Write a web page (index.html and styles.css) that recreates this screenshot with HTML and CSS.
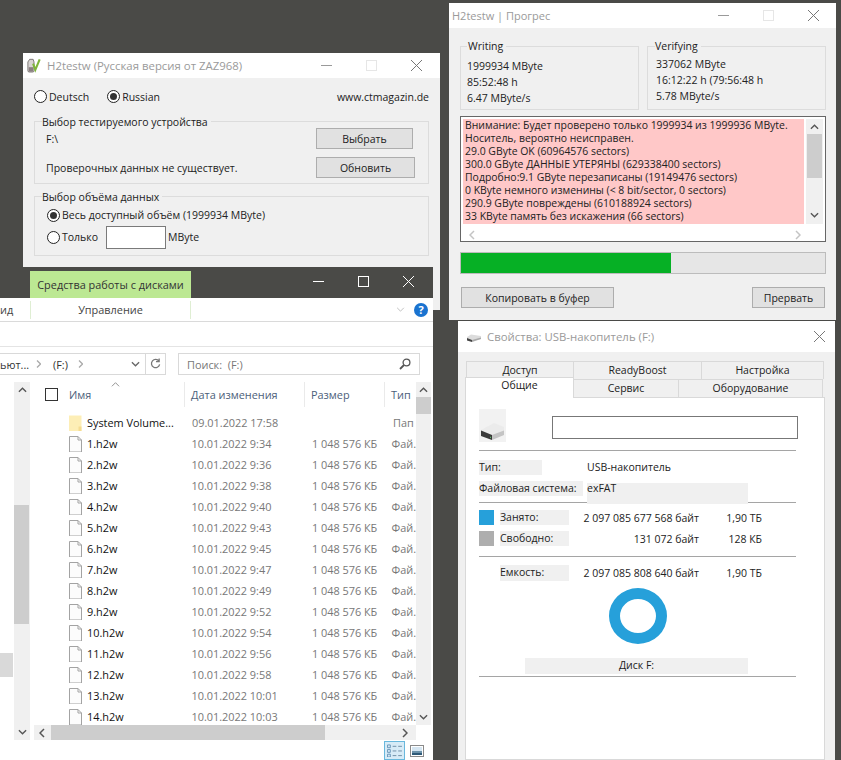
FILE: index.html
```html
<!DOCTYPE html>
<html lang="ru">
<head>
<meta charset="utf-8">
<title>H2testw</title>
<link rel="stylesheet" href="styles.css">
</head>
<body>
<div class="desktop">

<section class="win win-select">
  <header class="titlebar">
    <svg class="appicon" viewBox="0 0 16 17"><path d="M3 2h4l1 3v10a1.500 1.500 0 0 1-1.500 1.500h-4A1.500 1.500 0 0 1 1 15V5z" fill="#d8d4d2" stroke="#6e6a68"/><rect x="2" y="11" width="5" height="5" fill="#8a7f80"/><path d="M7 7l2.500 7L14.500 2" fill="none" stroke="#7fb53a" stroke-width="2.400"/></svg>
    <span class="title">H2testw (Русская версия от ZAZ968)</span>
    <span class="caps">
      <svg viewBox="0 0 11 11" class="cap"><path d="M0 5.500h11" stroke="#9a9a9a"/></svg>
      <svg viewBox="0 0 11 11" class="cap"><rect x=".5" y=".5" width="10" height="10" fill="none" stroke="#e6e6e6"/></svg>
      <svg viewBox="0 0 11 11" class="cap"><path d="M0 0l11 11M11 0L0 11" stroke="#777"/></svg>
    </span>
  </header>
  <div class="sel-body">
    <div class="langrow">
      <label class="radio"><i class="dot"></i>Deutsch</label>
      <label class="radio"><i class="dot on"></i>Russian</label>
      <span class="url">www.ctmagazin.de</span>
    </div>
    <fieldset class="group g-device">
      <legend>Выбор тестируемого устройства</legend>
      <div class="devrow"><span>F:\</span><button class="btn b-pick">Выбрать</button></div>
      <div class="devrow"><span>Проверочных данных не существует.</span><button class="btn b-refresh">Обновить</button></div>
    </fieldset>
    <fieldset class="group g-volume">
      <legend>Выбор объёма данных</legend>
      <label class="radio"><i class="dot on"></i>Весь доступный объём (1999934 MByte)</label>
      <div class="onlyrow">
        <label class="radio"><i class="dot"></i>Только</label>
        <span class="numbox"></span>
        <span>MByte</span>
      </div>
    </fieldset>
  </div>
</section>

<section class="win win-explorer">
  <header class="ex-title">
    <div class="disktab">Средства работы с дисками</div>
    <span class="ex-caps">
      <svg viewBox="0 0 11 11" class="excap"><path d="M0 5.500h11" stroke="#fff"/></svg>
      <svg viewBox="0 0 11 11" class="excap"><rect x=".5" y=".5" width="10" height="10" fill="none" stroke="#fff"/></svg>
      <svg viewBox="0 0 11 11" class="excap"><path d="M0 0l11 11M11 0L0 11" stroke="#fff"/></svg>
    </span>
  </header>
  <div class="ribbon">
    <span class="rib-view">ид</span>
    <span class="rib-manage">Управление</span>
    <span class="rib-right">
      <svg class="rib-chev" viewBox="0 0 10 6"><path d="M1 1l4 4 4-4" fill="none" stroke="#b5b5b5"/></svg>
      <span class="help">?</span>
    </span>
  </div>
  <div class="ribbon-gap"></div>
  <div class="addr-row">
    <div class="addr">
      <span class="crumb c1">ьют...</span>
      <svg class="crumb-arrow" viewBox="0 0 5 8"><path d="M1 .5L4.500 4 1 7.500" fill="none" stroke="#aaa" stroke-width="1.300"/></svg>
      <span class="crumb c2">(F:)</span>
      <svg class="crumb-arrow" viewBox="0 0 5 8"><path d="M1 .5L4.500 4 1 7.500" fill="none" stroke="#aaa" stroke-width="1.300"/></svg>
      <svg class="addr-chev" viewBox="0 0 10 6"><path d="M1 1l4 4 4-4" fill="none" stroke="#666" stroke-width="1.400"/></svg>
      <span class="addr-ref"><svg viewBox="0 0 12 12"><path d="M9.800 3.500A4.500 4.500 0 1 0 10.500 7M10 .5V4H6.500" fill="none" stroke="#777" stroke-width="1.400"/></svg></span>
    </div>
    <div class="search"><span>Поиск:&nbsp; (F:)</span><svg viewBox="0 0 12 12"><circle cx="7.500" cy="4.500" r="3.400" fill="none" stroke="#555" stroke-width="1.300"/><path d="M5 7l-4 4" stroke="#555" stroke-width="1.800"/></svg></div>
  </div>
  <div class="ex-main">
    <aside class="nav">
      <div class="nav-scroll">
        <svg class="chev" viewBox="0 0 10 6"><path d="M1 5l4-4 4 4" fill="none" stroke="#555" stroke-width="1.500"/></svg>
        <div class="nav-thumb"></div>
        <svg class="chev nav-down" viewBox="0 0 10 6"><path d="M1 1l4 4 4-4" fill="none" stroke="#555" stroke-width="1.500"/></svg>
      </div>
      <div class="nav-sel"></div>
    </aside>
    <div class="list">
      <div class="list-view">
        <div class="columns">
          <div class="head">
            <span class="c-check"><i class="check"></i></span>
            <span class="c-name">Имя<svg class="sort" viewBox="0 0 10 5"><path d="M1 4.500l4-4 4 4" fill="none" stroke="#888"/></svg></span>
            <span class="c-date">Дата изменения</span>
            <span class="c-size">Размер</span>
            <span class="c-type">Тип</span>
          </div>
          <div class="rows">
            <div class="row"><svg class="ficon" viewBox="0 0 13 16"><path d="M0 .5h12.500V16H0z" fill="#fdeeb6"/><path d="M9.500 11.500h3V16h-3z" fill="#f5dc92"/></svg><span class="r-name">System Volume...</span><span class="r-date">09.01.2022 17:58</span><span class="r-size"></span><span class="r-type">Пап</span></div>
            <div class="row"><svg class="ficon"><use href="#file"/></svg><span class="r-name">1.h2w</span><span class="r-date">10.01.2022 9:34</span><span class="r-size">1 048 576 КБ</span><span class="r-type">Фай.</span></div>
            <div class="row"><svg class="ficon"><use href="#file"/></svg><span class="r-name">2.h2w</span><span class="r-date">10.01.2022 9:36</span><span class="r-size">1 048 576 КБ</span><span class="r-type">Фай.</span></div>
            <div class="row"><svg class="ficon"><use href="#file"/></svg><span class="r-name">3.h2w</span><span class="r-date">10.01.2022 9:38</span><span class="r-size">1 048 576 КБ</span><span class="r-type">Фай.</span></div>
            <div class="row"><svg class="ficon"><use href="#file"/></svg><span class="r-name">4.h2w</span><span class="r-date">10.01.2022 9:40</span><span class="r-size">1 048 576 КБ</span><span class="r-type">Фай.</span></div>
            <div class="row"><svg class="ficon"><use href="#file"/></svg><span class="r-name">5.h2w</span><span class="r-date">10.01.2022 9:43</span><span class="r-size">1 048 576 КБ</span><span class="r-type">Фай.</span></div>
            <div class="row"><svg class="ficon"><use href="#file"/></svg><span class="r-name">6.h2w</span><span class="r-date">10.01.2022 9:45</span><span class="r-size">1 048 576 КБ</span><span class="r-type">Фай.</span></div>
            <div class="row"><svg class="ficon"><use href="#file"/></svg><span class="r-name">7.h2w</span><span class="r-date">10.01.2022 9:47</span><span class="r-size">1 048 576 КБ</span><span class="r-type">Фай.</span></div>
            <div class="row"><svg class="ficon"><use href="#file"/></svg><span class="r-name">8.h2w</span><span class="r-date">10.01.2022 9:49</span><span class="r-size">1 048 576 КБ</span><span class="r-type">Фай.</span></div>
            <div class="row"><svg class="ficon"><use href="#file"/></svg><span class="r-name">9.h2w</span><span class="r-date">10.01.2022 9:52</span><span class="r-size">1 048 576 КБ</span><span class="r-type">Фай.</span></div>
            <div class="row"><svg class="ficon"><use href="#file"/></svg><span class="r-name">10.h2w</span><span class="r-date">10.01.2022 9:54</span><span class="r-size">1 048 576 КБ</span><span class="r-type">Фай.</span></div>
            <div class="row"><svg class="ficon"><use href="#file"/></svg><span class="r-name">11.h2w</span><span class="r-date">10.01.2022 9:56</span><span class="r-size">1 048 576 КБ</span><span class="r-type">Фай.</span></div>
            <div class="row"><svg class="ficon"><use href="#file"/></svg><span class="r-name">12.h2w</span><span class="r-date">10.01.2022 9:58</span><span class="r-size">1 048 576 КБ</span><span class="r-type">Фай.</span></div>
            <div class="row"><svg class="ficon"><use href="#file"/></svg><span class="r-name">13.h2w</span><span class="r-date">10.01.2022 10:01</span><span class="r-size">1 048 576 КБ</span><span class="r-type">Фай.</span></div>
            <div class="row"><svg class="ficon"><use href="#file"/></svg><span class="r-name">14.h2w</span><span class="r-date">10.01.2022 10:03</span><span class="r-size">1 048 576 КБ</span><span class="r-type">Фай.</span></div>
          </div>
        </div>
        <div class="list-scroll">
          <svg class="chev" viewBox="0 0 10 6"><path d="M1 5l4-4 4 4" fill="none" stroke="#555" stroke-width="1.500"/></svg>
          <div class="v-thumb"></div>
          <svg class="chev v-down" viewBox="0 0 10 6"><path d="M1 1l4 4 4-4" fill="none" stroke="#555" stroke-width="1.500"/></svg>
        </div>
      </div>
      <div class="hscroll">
        <svg viewBox="0 0 6 10" class="hchev"><path d="M5 1L1 5l4 4" fill="none" stroke="#555" stroke-width="1.500"/></svg>
        <div class="h-track"><div class="h-thumb"></div></div>
        <svg viewBox="0 0 6 10" class="hchev"><path d="M1 1l4 4-4 4" fill="none" stroke="#555" stroke-width="1.500"/></svg>
      </div>
      <div class="statusbar">
        <span class="vbtn active"><svg viewBox="0 0 16 14"><path d="M.5 1h3v3h-3zM.5 6h3v3h-3zM.5 11h3v3h-3z" fill="none" stroke="#4c7fa8" stroke-width=".8"/><path d="M6 2.500h4M12 2.500h4M6 7.500h4M12 7.500h4M6 12.500h4M12 12.500h4" stroke="#6b8aa3"/></svg></span>
        <span class="vbtn vbtn-pic"><svg viewBox="0 0 14 12"><rect x=".5" y=".5" width="13" height="11" fill="#fff" stroke="#8a8a8a"/><rect x="2" y="2" width="10" height="4" fill="#d5e6f2"/><rect x="2" y="6" width="10" height="2" fill="#6d93ab"/><rect x="2" y="8" width="10" height="2" fill="#2f5a78"/></svg></span>
      </div>
    </div>
  </div>
</section>

<section class="win win-progress">
  <header class="titlebar prog-title">
    <span class="title">H2testw | Прогрес</span>
    <span class="caps">
      <svg viewBox="0 0 11 11" class="cap"><path d="M0 5.500h11" stroke="#9a9a9a"/></svg>
      <svg viewBox="0 0 11 11" class="cap"><rect x=".5" y=".5" width="10" height="10" fill="none" stroke="#e6e6e6"/></svg>
      <svg viewBox="0 0 11 11" class="cap"><path d="M0 0l11 11M11 0L0 11" stroke="#777"/></svg>
    </span>
  </header>
  <div class="prog-body">
    <div class="stats">
      <fieldset class="group stat">
        <legend>Writing</legend>
        <div>1999934 MByte</div><div>85:52:48 h</div><div>6.47 MByte/s</div>
      </fieldset>
      <fieldset class="group stat stat-v">
        <legend>Verifying</legend>
        <div>337062 MByte</div><div>16:12:22 h (79:56:48 h</div><div>5.78 MByte/s</div>
      </fieldset>
    </div>
    <div class="logbox">
      <div class="log-main">
        <div class="log-text">
          <div>Внимание: Будет проверено только 1999934 из 1999936 MByte.</div>
          <div>Носитель, вероятно неисправен.</div>
          <div>29.0 GByte OK (60964576 sectors)</div>
          <div>300.0 GByte ДАННЫЕ УТЕРЯНЫ (629338400 sectors)</div>
          <div>Подробно:9.1 GByte перезаписаны (19149476 sectors)</div>
          <div>0 KByte немного изменины (&lt; 8 bit/sector, 0 sectors)</div>
          <div>290.9 GByte повреждены (610188924 sectors)</div>
          <div>33 KByte память без искажения (66 sectors)</div>
        </div>
        <div class="log-scroll">
          <svg class="chev" viewBox="0 0 10 6"><path d="M1 5l4-4 4 4" fill="none" stroke="#555" stroke-width="1.500"/></svg>
          <div class="log-thumb"></div>
          <svg class="chev log-down" viewBox="0 0 10 6"><path d="M1 1l4 4 4-4" fill="none" stroke="#555" stroke-width="1.500"/></svg>
        </div>
      </div>
      <div class="log-h">
        <svg viewBox="0 0 6 10" class="hchev"><path d="M5 1L1 5l4 4" fill="none" stroke="#c4c4c4" stroke-width="1.500"/></svg>
        <svg viewBox="0 0 6 10" class="hchev"><path d="M1 1l4 4-4 4" fill="none" stroke="#c4c4c4" stroke-width="1.500"/></svg>
      </div>
    </div>
    <div class="bar"><div class="bar-fill"></div></div>
    <div class="prog-btns"><button class="btn b-copy">Копировать в буфер</button><button class="btn b-abort">Прервать</button></div>
  </div>
</section>

<section class="win win-props">
  <header class="titlebar props-title">
    <svg class="drive-small" viewBox="0 0 16 8"><path d="M5 .5L15 2v3L6 7 1 5.500V3z" fill="#dcdcdc"/><path d="M1 4l5 2v2L1 6.500z" fill="#444"/><path d="M6 6l9-2.500V5L6 8z" fill="#aaa"/></svg>
    <span class="title">Свойства: USB-накопитель (F:)</span>
    <svg class="close" viewBox="0 0 11 11"><path d="M0 0l11 11M11 0L0 11" stroke="#777"/></svg>
  </header>
  <div class="props-body">
    <div class="tabs">
      <div class="tabrow tabs-back">
        <span class="tab t1">Доступ</span><span class="tab t2">ReadyBoost</span><span class="tab t3">Настройка</span>
      </div>
      <div class="tabrow tabs-front">
        <span class="tab tactive">Общие</span><span class="tab t4">Сервис</span><span class="tab t5">Оборудование</span>
      </div>
    </div>
    <div class="panel">
      <div class="iconrow">
        <span class="bigdrive"><svg viewBox="0 0 27 33"><rect width="27" height="33" fill="#f2f2f2"/><path d="M2 21l13-7 10 4v5L12 30 2 26z" fill="#ebebeb"/><path d="M2 21.500l11 4.500v5L2 27z" fill="#3a3a3a"/><path d="M13 26l12-4.500V26l-12 5z" fill="#c4c4c4"/><path d="M11 27.500l1 .4v1.300l-1-.4z" fill="#5fc46a"/></svg></span>
        <span class="namebox"></span>
      </div>
      <hr class="sep s1">
      <div class="kv kv-type"><span class="shade s-type">Тип:</span><span>USB-накопитель</span></div>
      <div class="kv kv-fs"><span class="shade s-fs">Файловая система:</span><span class="shade s-exfat">exFAT</span></div>
      <hr class="sep">
      <div class="use u1"><i class="sw blue"></i><span class="shade s-use">Занято:</span><span class="bytes">2 097 085 677 568 байт</span><span class="hum">1,90 ТБ</span></div>
      <div class="use u2"><i class="sw grey"></i><span class="shade s-use">Свободно:</span><span class="bytes">131 072 байт</span><span class="hum">128 КБ</span></div>
      <hr class="sep sep3">
      <div class="use u3"><i class="sw none"></i><span class="shade s-use">Емкость:</span><span class="bytes">2 097 085 808 640 байт</span><span class="hum">1,90 ТБ</span></div>
      <div class="donut"></div>
      <div class="diskname">Диск F:</div>
      <hr class="sep sep4">
    </div>
  </div>
</section>

<svg class="defs" aria-hidden="true"><symbol id="file" viewBox="0 0 13 16"><path d="M.5.5h8.500l3.500 3.500v12H.5zM9 .5V4h3.500" fill="#fcfcfc" stroke="#a3a3a3"/></symbol></svg>

</div>
</body>
</html>
```

FILE: styles.css
```css
* { box-sizing: border-box; }
html, body { margin: 0; padding: 0; }
body { width: 841px; height: 760px; overflow: hidden; font-family: "Open Sans", "Liberation Sans", sans-serif; font-size: 10.5px; color: #222; }
.desktop { position: relative; width: 841px; height: 760px; background: #4a4a47; overflow: hidden; }
.win { position: absolute; background: #f0f0f0; }
svg { display: block; }
.defs { width: 0; height: 0; position: absolute; }

.titlebar { display: flex; align-items: center; height: 25px; background: #fff; padding-left: 4px; padding-bottom: 1px; color: #9a9a9a; font-size: 11.4px; }
.title { flex: 1; }
.caps { display: flex; gap: 34px; padding-right: 18px; }
.cap { width: 11px; height: 11px; }
.appicon { width: 14px; height: 16px; margin-right: 6px; }

.win-select { left: 23px; top: 53px; width: 417px; height: 257px; }
.sel-body { padding: 0 11px; }
.langrow { display: flex; align-items: center; height: 35px; padding-top: 2px; }
.radio { display: inline-flex; align-items: center; gap: 2px; }
.langrow .radio { margin-right: 18px; }
.url { margin-left: auto; }
.dot { width: 13px; height: 13px; border: 1px solid #222; border-radius: 50%; background: #fff; display: block; position: relative; }
.dot.on::after { content: ""; position: absolute; left: 2px; top: 2px; width: 7px; height: 7px; border-radius: 50%; background: #333; }
.group { border: 1px solid #dcdcdc; margin: 0; padding: 0; min-width: 0; }
.group legend { padding: 2px 3px 0 0; margin: 0 0 0 -4px; line-height: 14px; }
.g-device { height: 71px; padding: 0 13px 0 11px; }
.devrow { display: flex; justify-content: space-between; align-items: center; height: 29px; }
.devrow:first-of-type { margin-top: -5px; }
.btn { font: inherit; color: #222; background: #e1e1e1; border: 1px solid #adadad; padding: 0; height: 21px; display: block; }
.b-pick { width: 97px; margin-right: 2px; }
.b-refresh { width: 99px; }
.g-volume { height: 68px; margin-top: 4px; padding: 0 13px 0 12px; display: block; }
.g-volume legend { margin-left: -5px; }
.g-volume > .radio { height: 20px; display: flex; margin-top: 1px; }
.onlyrow { display: flex; align-items: center; height: 22px; margin-top: 1px; }
.numbox { width: 60px; height: 23px; background: #fff; border: 1px solid #7a7a7a; margin: 0 2px 0 8px; }

.win-progress { left: 449px; top: 3px; width: 387px; height: 317px; }
.prog-title { font-size: 11px; padding-left: 3px; }
.prog-title .caps { padding-right: 17px; }
.prog-body { padding: 0 10px 0 11px; }
.stats { display: flex; justify-content: space-between; padding-top: 11px; }
.stat { width: 179px; height: 71px; padding-left: 6px; line-height: 16px; }
.group.stat legend { padding: 0 3px 0 1px; margin: 0; }
.stat div:first-of-type { margin-top: 5px; }
.stat-v { padding-left: 8px; }
.group.stat-v legend { padding-left: 0; margin-left: -1px; }
.stat-v div:first-of-type { margin-top: 3px; }
.logbox { margin-top: 6px; height: 126px; background: #fff; border: 1px solid #666; padding: 2px; }
.log-main { display: flex; height: 105px; }
.log-text { width: 343px; background: #ffc8c8; line-height: 13px; padding: 0 0 0 2px; color: #222; white-space: nowrap; height: 105px; font-size: 10.45px; }
.log-scroll { width: 17px; margin-left: 2px; background: #f0f0f0; padding: 5px 4px; position: relative; }
.chev { width: 9px; height: 6px; }
.log-thumb { position: absolute; left: 1px; width: 15px; top: 15px; height: 44px; background: #cdcdcd; }
.log-down { position: absolute; left: 4px; bottom: 6px; }
.log-h { display: flex; justify-content: space-between; padding: 6px 22px 0 6px; }
.hchev { width: 6px; height: 10px; flex: none; }
.bar { margin-top: 10px; height: 22px; background: #e6e6e6; border: 1px solid #bcbcbc; }
.bar-fill { width: 210px; height: 100%; background: #06b025; }
.prog-btns { display: flex; justify-content: space-between; margin-top: 13px; padding: 0 1px; }
.b-copy { width: 153px; height: 21px; }
.b-abort { width: 73px; height: 21px; }

.win-explorer { left: 0; top: 267px; width: 433px; height: 493px; background: #fff; font-size: 10.9px; }
.ex-title { height: 31px; background: #4a4a47; display: flex; justify-content: flex-end; }
.disktab { width: 161px; height: 27px; margin: 4px auto 0 30px; background: #bce893; color: #333; text-align: center; line-height: 27px; }
.ex-caps { display: flex; gap: 34px; padding: 9px 19px 0 0; }
.excap { width: 11px; height: 11px; }
.ribbon { height: 24px; border-bottom: 1px solid #dadada; display: flex; align-items: center; color: #444; }
.rib-view { width: 30px; height: 18px; line-height: 18px; }
.rib-manage { width: 161px; text-align: center; height: 18px; line-height: 18px; border-left: 1px solid #dfeed3; border-right: 1px solid #dfeed3; }
.rib-right { margin-left: auto; display: flex; align-items: center; gap: 9px; padding-right: 5px; }
.rib-chev { width: 9px; height: 5px; }
.help { width: 14px; height: 14px; border-radius: 50%; background: #1a73d0; color: #fff; font-size: 11px; font-weight: 700; line-height: 14px; text-align: center; }
.ribbon-gap { height: 25px; border-bottom: 1px solid #e4e4e4; }
.addr-row { display: flex; padding-top: 6px; height: 33px; }
.addr { width: 166px; height: 22px; border: 1px solid #d9d9d9; border-left: 0; display: flex; align-items: center; color: #333; }
.crumb { white-space: nowrap; }
.c1 { width: 36px; }
.c2 { width: 25px; margin-left: 12px; }
.crumb-arrow { width: 5px; height: 8px; flex: none; }
.addr-chev { width: 9px; height: 6px; margin: 0 5px 0 auto; }
.addr-ref { width: 20px; height: 20px; border-left: 1px solid #d9d9d9; padding: 4px; }
.search { width: 242px; height: 22px; margin-left: 12px; border: 1px solid #d9d9d9; display: flex; align-items: center; justify-content: space-between; padding: 0 8px; color: #777; }
.search svg { width: 12px; height: 12px; }
.ex-main { display: flex; height: 380px; }
.nav { width: 30px; position: relative; }
.nav-scroll { position: absolute; left: 14px; top: 2px; width: 16px; height: 358px; background: #f0f0f0; padding: 5px 4px; }
.nav-thumb { position: absolute; left: 0; top: 123px; width: 15px; height: 119px; background: #cdcdcd; }
.nav-down { position: absolute; left: 4px; bottom: 5px; }
.nav-sel { position: absolute; left: 0; top: 273px; width: 13px; height: 24px; background: #d9d9d9; }
.list { width: 403px; padding-left: 4px; }
.list-view { display: flex; height: 345px; }
.columns { width: 382px; overflow: hidden; }
.head { display: flex; height: 25px; color: #4c607a; margin: 2px 0 5px; }
.head span { height: 25px; line-height: 25px; border-right: 1px solid #eaeaea; white-space: nowrap; flex: none; }
.head .c-check { width: 34px; border-right: 0; padding: 6px 0 0 11px; }
.check { display: block; width: 13px; height: 13px; border: 1px solid #333; }
.c-name { width: 117px; position: relative; padding-left: 1px; }
.sort { position: absolute; left: 43px; top: 0; width: 9px; height: 5px; }
.c-date { width: 120px; padding-left: 6px; }
.c-size { width: 80px; padding-left: 6px; }
.head .c-type { width: 31px; padding-left: 6px; border-right: 0; overflow: hidden; }
.row { display: flex; align-items: center; height: 21px; white-space: nowrap; }
.ficon { width: 13px; height: 16px; margin: 0 5px 0 35px; flex: none; }
.r-name { width: 105px; color: #111; }
.r-date { width: 120px; color: #777; }
.r-size { width: 80px; color: #777; padding-left: 1px; }
.r-type { color: #777; padding-left: 1px; }
.list-scroll { width: 15px; height: 343px; margin-top: 2px; background: #f0f0f0; position: relative; padding: 5px 3px; }
.v-thumb { position: absolute; left: 0; top: 15px; width: 15px; height: 17px; background: #cdcdcd; }
.v-down { position: absolute; left: 3px; bottom: 5px; }
.hscroll { display: flex; align-items: center; height: 15px; width: 382px; background: #f0f0f0; padding: 0 8px 0 5px; }
.h-track { flex: 1; height: 15px; margin: 0 5px 0 6px; padding-right: 72px; }
.h-thumb { height: 15px; background: #cdcdcd; }
.statusbar { display: flex; justify-content: flex-end; align-items: flex-start; gap: 5px; height: 20px; padding: 1px 9px 0 0; }
.vbtn { width: 21px; height: 19px; padding: 2px; }
.vbtn.active { background: #d7ebf7; border: 1px solid #69b8dd; }
.vbtn-pic { width: 14px; height: 12px; padding: 0; margin-top: 4px; }
.vbtn svg { width: 100%; height: 100%; }

.win-props { left: 458px; top: 321px; width: 377px; height: 439px; background: #f0f0f0; }
.props-title { height: 31px; padding-left: 8px; }
.drive-small { width: 16px; height: 8px; margin-right: 5px; margin-top: 3px; }
.close { width: 11px; height: 11px; margin-right: 10px; flex: none; }
.props-body { padding: 0 10px 0 7px; }
.tabs { height: 45px; position: relative; }
.tabrow { display: flex; }
.tab { display: block; border: 1px solid #d9d9d9; border-bottom: 0; text-align: center; margin-left: -1px; background: #f0f0f0; color: #222; }
.tabs-back { height: 27px; padding: 9px 0 0 2px; }
.tabs-back .tab { height: 18px; line-height: 16px; }
.t1 { width: 108px; }
.t2 { width: 129px; }
.t3 { width: 123px; }
.tabs-front { height: 18px; }
.tabs-front .tab { height: 18px; line-height: 17px; }
.t4 { width: 106px; }
.t5 { width: 145px; }
.tabs-front .tactive { width: 109px; height: 21px; background: #fff; margin: -2px 0 0; line-height: 15px; position: relative; z-index: 1; }
.panel { background: #fff; border: 1px solid #d9d9d9; height: 363px; padding: 0 28px 0 13px; }
.iconrow { display: flex; align-items: flex-start; height: 44px; padding-top: 11px; }
.bigdrive { width: 27px; height: 33px; flex: none; }
.namebox { width: 246px; height: 23px; margin: 7px 0 0 46px; border: 1px solid #777; flex: none; }
.sep { border: 0; height: 1px; background: #a5a5a5; margin: 0; width: 317px; }
.s1 { margin-top: 8px; }
.kv { display: flex; color: #222; }
.kv-type { margin-top: 9px; height: 20px; line-height: 15px; }
.shade { background: #f0f0f0; display: block; }
.s-type { width: 63px; height: 15px; margin-right: 45px; }
.kv-fs { margin-top: 1px; height: 21px; }
.s-fs { width: 104px; height: 15px; line-height: 15px; white-space: nowrap; }
.s-exfat { width: 161px; height: 21px; margin: 2px 0 0 4px; line-height: 10px; }
.use { display: flex; align-items: center; height: 15px; }
.u1 { margin-top: 7px; }
.u2 { margin-top: 6px; }
.sw { width: 15px; height: 15px; margin-right: 6px; flex: none; }
.blue { background: #26a0da; }
.grey { background: #aeaeae; }
.s-use { width: 69px; height: 15px; line-height: 15px; }
.bytes { width: 130px; text-align: right; white-space: nowrap; }
.hum { margin-left: 27px; white-space: nowrap; width: 36px; text-align: right; }
.sep3 { margin-top: 10px; }
.u3 { margin-top: 8px; height: 16px; }
.u3 .s-use { height: 16px; }
.donut { width: 58px; height: 56px; border-radius: 50%; border: 11px solid #26a0da; margin: 7px 0 0 130px; }
.diskname { width: 223px; height: 16px; line-height: 14px; margin: 14px 0 0 46px; background: #f0f0f0; text-align: center; }
.sep4 { margin-top: 2px; }
```
